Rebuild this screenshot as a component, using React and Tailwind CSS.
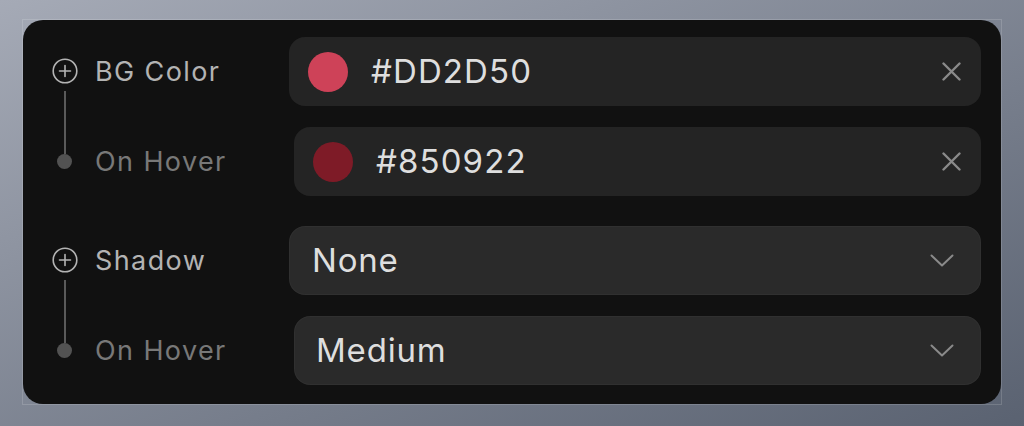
import React from "react";

function PlusIcon() {
  return (
    <svg width="26" height="26" viewBox="0 0 26 26" className="block">
      <circle cx="13" cy="13" r="11.8" fill="none" stroke="#b4b4b4" strokeWidth="1.6" />
      <path d="M13 7.5v11M7.5 13h11" stroke="#b4b4b4" strokeWidth="1.6" strokeLinecap="round" />
    </svg>
  );
}

function XIcon() {
  return (
    <svg width="19" height="19" viewBox="0 0 19 19" className="block">
      <path d="M1.5 1.5l16 16M17.5 1.5l-16 16" stroke="#8a8a8a" strokeWidth="2.4" strokeLinecap="round" />
    </svg>
  );
}

function Chevron() {
  return (
    <svg width="24" height="13" viewBox="0 0 24 13" className="block">
      <path d="M1.5 1.5L12 11.5L22.5 1.5" fill="none" stroke="#8a8a8a" strokeWidth="2" strokeLinecap="round" strokeLinejoin="round" />
    </svg>
  );
}

function ColorField({ color, hex, offset }) {
  return (
    <div
      className={`flex h-[69px] flex-1 items-center rounded-2xl bg-[#242424] pl-[19px] pr-[20px] ${offset ? "ml-[5px]" : ""}`}
    >
      <div className="h-[40px] w-[40px] shrink-0 rounded-full" style={{ backgroundColor: color }} />
      <span className="ml-[23px] flex-1 text-[33px] leading-none tracking-[1.1px] text-[#dedede]">{hex}</span>
      <XIcon />
    </div>
  );
}

function SelectField({ value, offset }) {
  return (
    <div
      className={`flex h-[69px] flex-1 items-center rounded-2xl bg-[#2a2a2a] shadow-[inset_0_0_0_1px_rgba(255,255,255,0.03)] pr-[27px] ${offset ? "ml-[5px] pl-[22px]" : "pl-[23px]"}`}
    >
      <span className="flex-1 text-[33px] leading-none tracking-[0.8px] text-[#dedede]">{value}</span>
      <Chevron />
    </div>
  );
}

function Group({ label, first, second }) {
  return (
    <div className="flex">
      <div className="flex w-[26px] shrink-0 flex-col items-center pt-[21px] pb-[27px]">
        <PlusIcon />
        <div className="mt-[7px] w-[2px] flex-1 bg-[#5a5a5a]" />
        <div className="h-[15px] w-[15px] -translate-x-[1px] rounded-full bg-[#525252]" />
      </div>
      <div className="ml-[17px] flex flex-1 flex-col gap-[21px]">
        <div className="flex items-center">
          <span className="w-[194px] shrink-0 text-[27px] leading-none tracking-[1.4px] text-[#b3b3b3]">{label}</span>
          {first}
        </div>
        <div className="flex items-center">
          <span className="w-[194px] shrink-0 text-[27px] leading-none tracking-[1.4px] text-[#787878]">On Hover</span>
          {second}
        </div>
      </div>
    </div>
  );
}

export default function App() {
  return (
    <div
      className="h-[426px] w-full bg-gradient-to-br from-[#a5aab6] to-[#5a6271] pl-[23px] pt-[20px]"
      style={{ fontFamily: "Inter, 'Noto Sans', sans-serif" }}
    >
      <div className="w-[978px] outline outline-1 outline-white/15">
        <div className="flex flex-col gap-[30px] rounded-[20px] bg-[#111111] pb-[19px] pl-[29px] pr-[20px] pt-[17px]">
          <Group
            label="BG Color"
            first={<ColorField color="#CE4258" hex="#DD2D50" />}
            second={<ColorField color="#7E1B27" hex="#850922" offset />}
          />
          <Group
            label="Shadow"
            first={<SelectField value="None" />}
            second={<SelectField value="Medium" offset />}
          />
        </div>
      </div>
    </div>
  );
}
